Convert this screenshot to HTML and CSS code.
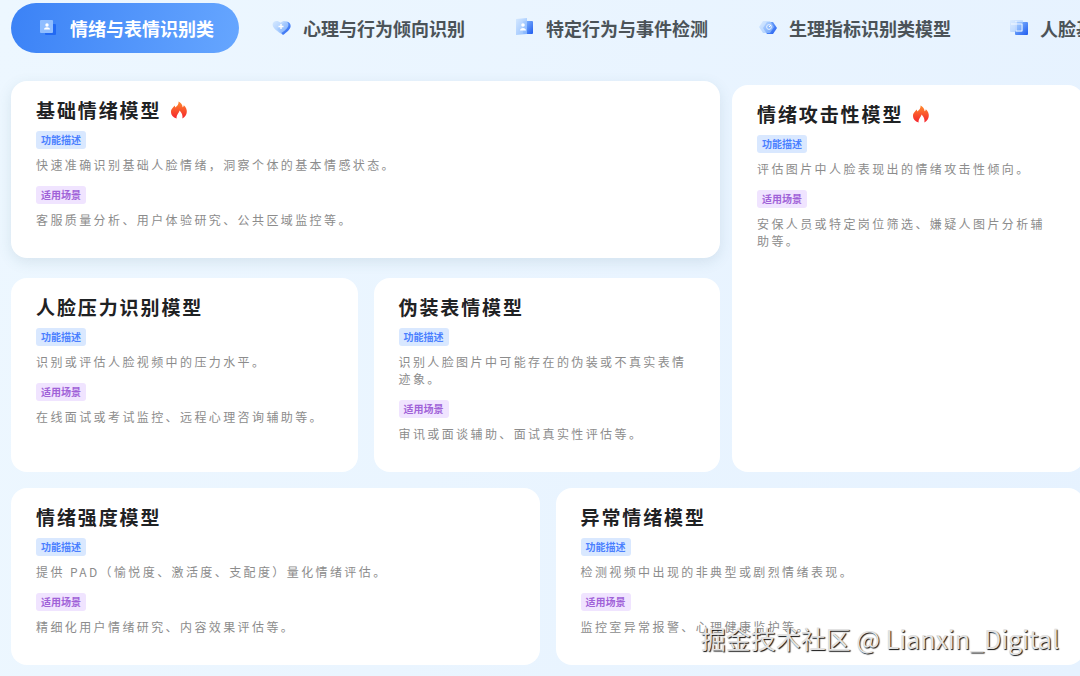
FILE: index.html
```html
<!DOCTYPE html>
<html lang="zh-CN">
<head>
    <meta charset="UTF-8">
    <meta name="viewport" content="width=device-width, initial-scale=1.0">
    <title>情绪与表情识别类</title>
    <link rel="stylesheet" href="styles.css">
</head>
<body>

    <!-- shared gradients and the flame icon -->
    <svg class="defs" width="0" height="0" aria-hidden="true">
        <defs>
            <linearGradient id="blue" x1="0" y1="0" x2="1" y2="1">
                <stop offset="0" stop-color="#8fc0ff"/>
                <stop offset="1" stop-color="#1f5cf0"/>
            </linearGradient>
            <linearGradient id="pale" x1="0" y1="0" x2="1" y2="1">
                <stop offset="0" stop-color="#d3e7ff"/>
                <stop offset="1" stop-color="#86b7ff"/>
            </linearGradient>
            <linearGradient id="fire" x1="0" y1="0" x2="0" y2="1">
                <stop offset="0" stop-color="#ff8a2c"/>
                <stop offset="1" stop-color="#f5222d"/>
            </linearGradient>
            <symbol id="flame" viewBox="0 0 18 18">
                <path fill="url(#fire)" d="M8.6 0.6C12 2.6 12.4 4.6 12.6 6.2C13.4 5.8 13.7 5 13.8 4.2C16 6.2 17 8.6 16.8 11C16.6 14 15 16.2 12.4 17.4C13 14.2 11.6 11.4 9.6 9.4C9.2 11.6 6.2 13.6 6.6 17.4C3 16.4 1 14 1 11.2C1 7.6 3.6 6.6 4.6 4.6C5 5.2 5.2 5.8 5.2 6.6C7.4 5.2 8.8 3 8.6 0.6Z"/>
            </symbol>
        </defs>
    </svg>

    <nav class="tabs">
        <button class="tab active" type="button">
            <svg class="tab-icon" viewBox="0 0 20 20" aria-hidden="true">
                <rect x="6" y="6" width="11" height="11" rx="1" fill="#2169f3"/>
                <rect x="1" y="2" width="13" height="13" rx="1" fill="#8fbdff"/>
                <circle cx="8" cy="7" r="1.7" fill="#fff"/>
                <path d="M5 11.4C5 8.4 11 8.4 11 11.4Z" fill="#fff"/>
            </svg>
            <span>情绪与表情识别类</span>
        </button>
        <button class="tab" type="button">
            <svg class="tab-icon" viewBox="0 0 20 20" aria-hidden="true">
                <path d="M11 17L5 11L12 4.5C15 2.5 19 4.5 18.6 8.4C18.4 11 15 14 11 17Z" fill="url(#blue)"/>
                <path d="M8.6 15.5C4.5 12.8 0.6 10 0.6 6.6C0.6 3 5.4 1.4 8.6 4.8C11.8 1.6 16.4 3.2 16.4 6.8C16.4 10 12.6 13 8.6 15.5Z" fill="url(#pale)" opacity="0.9"/>
                <path d="M9 6V11M6.5 8.5H11.5" stroke="#fff" stroke-width="1.4"/>
            </svg>
            <span>心理与行为倾向识别</span>
        </button>
        <button class="tab" type="button">
            <svg class="tab-icon" viewBox="0 0 20 20" aria-hidden="true">
                <rect x="8" y="3" width="10" height="13" rx="1" fill="url(#blue)"/>
                <path d="M1 1L12 0V16L1 17Z" fill="url(#pale)" opacity="0.9"/>
                <circle cx="8" cy="7" r="1.8" fill="#fff"/>
                <path d="M5 12.6C5 9 11 9 11 12.6Z" fill="#fff"/>
            </svg>
            <span>特定行为与事件检测</span>
        </button>
        <button class="tab" type="button">
            <svg class="tab-icon" viewBox="0 0 20 20" aria-hidden="true">
                <path d="M9 4H15L19 10L15 16H9L5 10Z" fill="url(#blue)"/>
                <path d="M5 3H12L16 9L12 15H5L1 9Z" fill="url(#pale)" opacity="0.7"/>
                <circle cx="11" cy="9" r="2.4" fill="none" stroke="#e4f0ff" stroke-width="1"/>
                <path d="M11 9L13 7" stroke="#fff" stroke-width="1"/>
            </svg>
            <span>生理指标识别类模型</span>
        </button>
        <button class="tab" type="button">
            <svg class="tab-icon" viewBox="0 0 20 20" aria-hidden="true">
                <rect x="6" y="4" width="13" height="13" rx="1" fill="url(#blue)"/>
                <rect x="1" y="2" width="13" height="12" rx="1" fill="url(#pale)" opacity="0.6"/>
                <path d="M7 3V13H13V6H2" fill="none" stroke="#fff" stroke-width="1" opacity="0.8"/>
            </svg>
            <span>人脸基</span>
        </button>
    </nav>

    <main class="board">
        <div class="row row-top">
            <div class="stack">
                <section class="card raised">
                    <h2>基础情绪模型 <svg class="flame"><use href="#flame"/></svg></h2>
                    <span class="tag">功能描述</span>
                    <p>快速准确识别基础人脸情绪，洞察个体的基本情感状态。</p>
                    <span class="tag scene">适用场景</span>
                    <p>客服质量分析、用户体验研究、公共区域监控等。</p>
                </section>
                <div class="row row-half">
                    <section class="card">
                        <h2>人脸压力识别模型</h2>
                        <span class="tag">功能描述</span>
                        <p>识别或评估人脸视频中的压力水平。</p>
                        <span class="tag scene">适用场景</span>
                        <p>在线面试或考试监控、远程心理咨询辅助等。</p>
                    </section>
                    <section class="card">
                        <h2>伪装表情模型</h2>
                        <span class="tag">功能描述</span>
                        <p>识别人脸图片中可能存在的伪装或不真实表情迹象。</p>
                        <span class="tag scene">适用场景</span>
                        <p>审讯或面谈辅助、面试真实性评估等。</p>
                    </section>
                </div>
            </div>
            <section class="card">
                <h2>情绪攻击性模型 <svg class="flame"><use href="#flame"/></svg></h2>
                <span class="tag">功能描述</span>
                <p>评估图片中人脸表现出的情绪攻击性倾向。</p>
                <span class="tag scene">适用场景</span>
                <p>安保人员或特定岗位筛选、嫌疑人图片分析辅助等。</p>
            </section>
        </div>

        <div class="row row-half">
            <section class="card">
                <h2>情绪强度模型</h2>
                <span class="tag">功能描述</span>
                <p>提供 PAD（愉悦度、激活度、支配度）量化情绪评估。</p>
                <span class="tag scene">适用场景</span>
                <p>精细化用户情绪研究、内容效果评估等。</p>
            </section>
            <section class="card">
                <h2>异常情绪模型</h2>
                <span class="tag">功能描述</span>
                <p>检测视频中出现的非典型或剧烈情绪表现。</p>
                <span class="tag scene">适用场景</span>
                <p>监控室异常报警、心理健康监护等。</p>
            </section>
        </div>
    </main>

    <div class="watermark">掘金技术社区 @ Lianxin_Digital</div>

</body>
</html>
```
FILE: styles.css
```css
* {
    box-sizing: border-box;
}

body {
    margin: 0;
    padding: 3px 0 10px 11px;
    min-height: 100vh;
    overflow: hidden;
    position: relative;
    font-family: "Noto Sans CJK SC", sans-serif;
    background: linear-gradient(100deg, #edf7ff, #e6f2ff);
}

.defs {
    position: absolute;
}

/* tabs */
.tabs {
    display: grid;
    grid-template-columns: 228px 238px 238px 246px auto;
    gap: 5px;
    margin-bottom: 32px;
}

.tab {
    display: flex;
    align-items: center;
    gap: 11px;
    height: 50px;
    padding: 0 0 0 28px;
    border: none;
    border-radius: 25px;
    background: none;
    color: #4b5358;
    font-family: inherit;
    font-size: 18px;
    font-weight: 700;
    line-height: 24px;
    white-space: nowrap;
    cursor: pointer;
}

.tab.active {
    background: linear-gradient(100deg, #3b82f6, #66a6ff);
    color: #fff;
}

.tab-icon {
    width: 20px;
    height: 20px;
    flex: none;
}

/* cards, the right edge runs slightly past the window */
.board {
    display: flex;
    flex-direction: column;
    gap: 16px;
    margin-right: -4px;
}

.row {
    display: grid;
}

.row-top {
    grid-template-columns: 1fr 352px;
    gap: 12px;
}

.row-half {
    grid-template-columns: 1fr 1fr;
    gap: 16px;
}

.stack {
    display: flex;
    flex-direction: column;
    gap: 16px;
}

.card {
    padding: 16px 25px 30px;
    border-radius: 16px;
    background: #fff;
}

.card.raised {
    transform: translateY(-4px);
    box-shadow: 0 4px 14px rgba(60, 110, 120, 0.13);
}

.card h2 {
    display: flex;
    align-items: center;
    gap: 9px;
    margin: 0 0 8px;
    font-size: 19px;
    line-height: 26px;
    font-weight: 700;
    letter-spacing: 0.1em;
    color: #1f2224;
}

.flame {
    width: 18px;
    height: 18px;
}

.tag {
    display: block;
    width: fit-content;
    padding: 0 5px;
    border-radius: 3px;
    background: #d9e8ff;
    color: #4b80ff;
    font-size: 10px;
    line-height: 18px;
    font-weight: 700;
}

.tag.scene {
    background: #f0e4ff;
    color: #a062d8;
}

.card p {
    margin: 7px 0 13px;
    font-size: 12px;
    line-height: 17px;
    letter-spacing: 0.2em;
    color: #8c8c8c;
}

.card p:last-child {
    margin-bottom: 0;
}

.watermark {
    position: absolute;
    right: 21px;
    bottom: 20px;
    font-size: 25px;
    line-height: 36px;
    color: #e2e2e2;
    text-shadow: 1px 1px 1px #111;
}
```
